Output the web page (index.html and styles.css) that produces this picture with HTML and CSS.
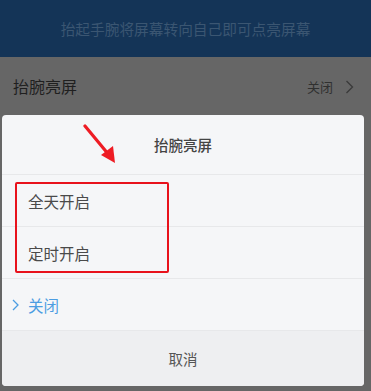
FILE: index.html
```html
<!DOCTYPE html>
<html lang="zh">
<head>
<meta charset="utf-8">
<link rel="stylesheet" href="styles.css">
</head>
<body>
<div class="screen">
  <header class="hero">抬起手腕将屏幕转向自己即可点亮屏幕</header>
  <div class="setting-row">
    <span class="setting-name">抬腕亮屏</span>
    <span class="setting-value">关闭
      <svg class="chev" width="9" height="14" viewBox="0 0 9 14"><path d="M1.5 1 L7.5 7 L1.5 13" fill="none" stroke="#3a3a3a" stroke-width="1.3"/></svg>
    </span>
  </div>

  <div class="sheet">
    <div class="sheet-title">抬腕亮屏</div>
    <div class="option">全天开启</div>
    <div class="option">定时开启</div>
    <div class="option selected">
      <svg class="sel-chev" width="7" height="12" viewBox="0 0 7 12"><path d="M1 1 L6 6 L1 11" fill="none" stroke="#4c9de2" stroke-width="1.3"/></svg>
      <span>关闭</span>
    </div>
    <div class="cancel">取消</div>
  </div>

  <div class="highlight-box"></div>
  <svg class="arrow" width="40" height="45" viewBox="0 0 40 45">
    <line x1="2" y1="2" x2="26" y2="31" stroke="#ee1c24" stroke-width="3.2" stroke-linecap="round"/>
    <polygon points="32,39 18,31 30,22" fill="#ee1c24"/>
  </svg>
</div>
</body>
</html>
```

FILE: styles.css
```css
* { box-sizing: border-box; }
html, body { margin: 0; padding: 0; }
body {
  font-family: "Noto Sans CJK SC", "Noto Sans", sans-serif;
  background: #666666;
}
.screen {
  position: relative;
  width: 371px;
  height: 391px;
  overflow: hidden;
  background: #666666;
}
.hero {
  height: 57px;
  background: #143457;
  color: #3b5672;
  font-size: 14.7px;
  line-height: 57px;
  text-align: center;
  padding-top: 0;
}
.setting-row {
  display: flex;
  align-items: center;
  justify-content: space-between;
  height: 58px;
  padding: 0 17px 0 13px;
}
.setting-name {
  font-size: 16px;
  color: #1f1f1f;
}
.setting-value {
  display: flex;
  align-items: center;
  gap: 12px;
  font-size: 13px;
  color: #303030;
}
.chev { margin-top: 1px; }

.sheet {
  position: absolute;
  left: 2px;
  top: 115px;
  width: 362px;
  height: 271px;
  background: #f5f6f8;
  border-radius: 4px;
  overflow: hidden;
  display: flex;
  flex-direction: column;
}
.sheet-title {
  height: 60px;
  display: flex;
  align-items: center;
  justify-content: center;
  font-size: 14.5px;
  font-weight: 500;
  color: #444;
  border-bottom: 1px solid #e7e8ea;
  padding-bottom: 0;
}
.option {
  height: 52px;
  display: flex;
  align-items: center;
  padding-left: 26px;
  font-size: 15.5px;
  color: #4a4a4a;
  border-bottom: 1px solid #e7e8ea;
}
.option.selected {
  padding-left: 10px;
  gap: 9px;
  color: #4c9de2;
}
.cancel {
  flex: 1;
  display: flex;
  align-items: center;
  justify-content: center;
  background: #eeeff1;
  font-size: 14.5px;
  color: #555;
}
.highlight-box {
  position: absolute;
  left: 15px;
  top: 182px;
  width: 154px;
  height: 91px;
  border: 2px solid #e8121c;
  border-radius: 2px;
}
.arrow {
  position: absolute;
  left: 83px;
  top: 124px;
}
```
